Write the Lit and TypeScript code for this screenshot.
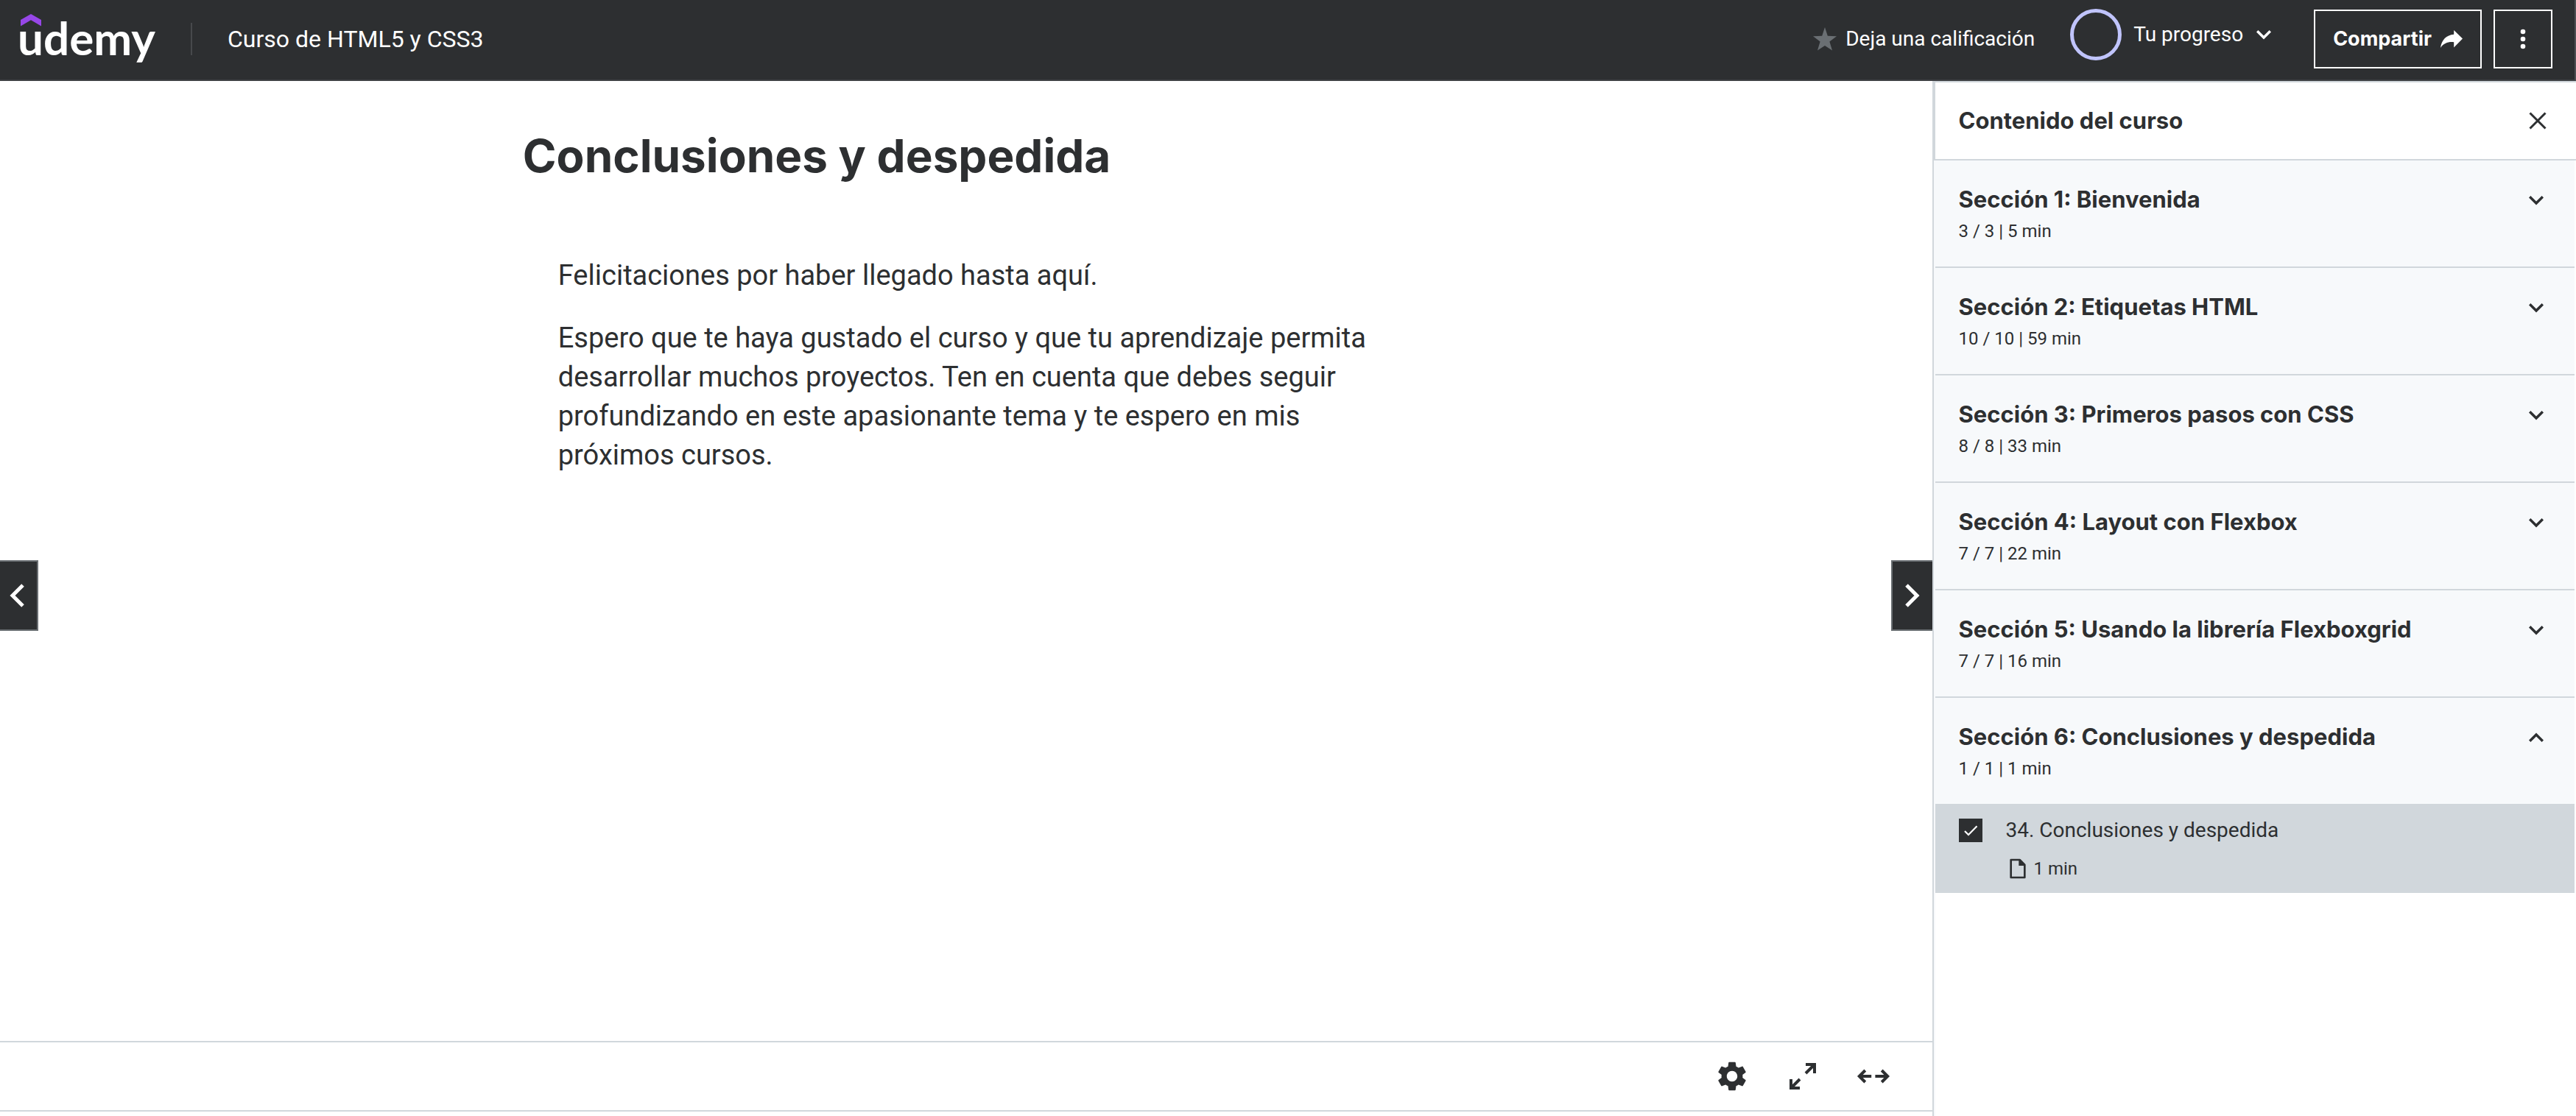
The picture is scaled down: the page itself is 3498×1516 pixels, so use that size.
import { LitElement, html, css, svg, nothing } from "lit";
import { customElement, state } from "lit/decorators.js";

interface Lecture {
  id: number;
  title: string;
  duration: string;
}

interface Section {
  title: string;
  summary: string;
  lectures: Lecture[];
}

const SECTIONS: Section[] = [
  { title: "Sección 1: Bienvenida", summary: "3 / 3 | 5 min", lectures: [] },
  { title: "Sección 2: Etiquetas HTML", summary: "10 / 10 | 59 min", lectures: [] },
  { title: "Sección 3: Primeros pasos con CSS", summary: "8 / 8 | 33 min", lectures: [] },
  { title: "Sección 4: Layout con Flexbox", summary: "7 / 7 | 22 min", lectures: [] },
  { title: "Sección 5: Usando la librería Flexboxgrid", summary: "7 / 7 | 16 min", lectures: [] },
  {
    title: "Sección 6: Conclusiones y despedida",
    summary: "1 / 1 | 1 min",
    lectures: [{ id: 34, title: "34. Conclusiones y despedida", duration: "1 min" }],
  },
];

const chevronDown = svg`<path d="M7.2 11.2 16 20l8.8-8.8" fill="none" stroke="currentColor" stroke-width="3.4"/>`;
const chevronUp = svg`<path d="M7.2 20.8 16 12l8.8 8.8" fill="none" stroke="currentColor" stroke-width="3.4"/>`;

@customElement("course-header")
export class CourseHeader extends LitElement {
  static styles = css`
    :host {
      display: block;
      font-family: Roboto, "Liberation Sans", sans-serif;
    }
    .bar {
      box-sizing: border-box;
      height: 110px;
      padding: 0 30px 2px 24px;
      display: flex;
      align-items: center;
      background: #2d2f31;
      border-bottom: 2px solid #3e4043;
      border-right: 2px solid #4d4f52;
      color: #fff;
    }
    .logo {
      align-self: flex-start;
      padding-top: 19px;
      display: flex;
      flex-direction: column;
      color: #fff;
      text-decoration: none;
    }
    .hat {
      display: block;
      width: 28px;
      height: 17px;
      margin-left: 4px;
    }
    .word {
      font: 700 62px/30px Lato, sans-serif;
    }
    .divider {
      width: 2px;
      height: 44px;
      margin: 0 48px;
      background: #47494c;
    }
    .course {
      color: #fff;
      font-size: 32px;
      line-height: 44px;
      text-decoration: none;
      white-space: nowrap;
    }
    .actions {
      margin-left: auto;
      display: flex;
      align-items: center;
    }
    button {
      box-sizing: border-box;
      margin: 0;
      padding: 0;
      border: 0;
      background: none;
      color: #fff;
      font: 400 28px/40px Roboto, "Liberation Sans", sans-serif;
      display: flex;
      align-items: center;
      white-space: nowrap;
      cursor: pointer;
    }
    svg {
      display: block;
      flex: none;
    }
    .rate {
      gap: 12px;
      margin-right: 48px;
    }
    .progress {
      padding-bottom: 12px;
      margin-right: 52px;
    }
    .ring {
      box-sizing: border-box;
      width: 70px;
      height: 70px;
      margin-right: 16px;
      border: 5px solid #c0c4fc;
      border-radius: 50%;
    }
    .progress svg {
      margin-left: 12px;
    }
    .share,
    .more {
      height: 80px;
      border: 2px solid #fff;
      justify-content: center;
    }
    .share {
      padding: 0 24px;
      gap: 12px;
      margin-right: 16px;
      font: 700 27px/40px Inter, "Liberation Sans", sans-serif;
    }
    .more {
      width: 80px;
    }
  `;

  render() {
    return html`
      <header class="bar">
        <a class="logo" href="#inicio">
          <svg class="hat" viewBox="0 0 28 17" aria-hidden="true">
            <path d="M14 0 28 8v8.5L14 8.2 0 16.5V8z" fill="#9747e8" />
          </svg>
          <span class="word">udemy</span>
        </a>
        <span class="divider"></span>
        <a class="course" href="#curso">Curso de HTML5 y CSS3</a>
        <div class="actions">
          <button class="rate" type="button">
            <svg width="32" height="32" viewBox="0 0 32 32" aria-hidden="true">
              <path d="M16 0l3.8 11.7L32 12.2l-9.6 7.4L26 31.6 16 25 6 31.6l3.6-12L0 12.2l12.2-.5z" fill="#6a6f73" />
            </svg>
            Deja una calificación
          </button>
          <button class="progress" type="button">
            <span class="ring"></span>
            Tu progreso
            <svg width="32" height="32" viewBox="0 0 32 32" aria-hidden="true">${chevronDown}</svg>
          </button>
          <button class="share" type="button">
            Compartir
            <svg width="30" height="24" viewBox="0 0 30 24" aria-hidden="true">
              <path d="M18.2 0 30 11.6 18.2 23.6v-7.4C10.5 15.4 4.4 17.6 0 24 1.4 13.2 8 6.6 18.2 5.8z" fill="currentColor" />
            </svg>
          </button>
          <button class="more" type="button" aria-label="Más opciones">
            <svg width="8" height="28" viewBox="0 0 8 28" fill="currentColor" aria-hidden="true">
              <circle cx="4" cy="4" r="3.3" /><circle cx="4" cy="14" r="3.3" /><circle cx="4" cy="24" r="3.3" />
            </svg>
          </button>
        </div>
      </header>
    `;
  }
}

@customElement("lecture-view")
export class LectureView extends LitElement {
  static styles = css`
    :host {
      display: flex;
      flex-direction: column;
      font-family: Roboto, "Liberation Sans", sans-serif;
      color: #2d2f31;
    }
    .stage {
      position: relative;
      flex: 1;
      display: flex;
      flex-direction: column;
      margin-bottom: 6px;
      border-bottom: 2px solid #d1d7dc;
    }
    article {
      flex: 1;
      box-sizing: border-box;
      width: 100%;
      max-width: 1204px;
      margin: 0 auto;
      padding-top: 64px;
    }
    h1 {
      margin: 0 0 98px;
      font: 700 62px/76px Inter, "Liberation Sans", sans-serif;
    }
    .body {
      padding: 0 48px;
      font-size: 38px;
      line-height: 53px;
    }
    p {
      margin: 0 0 32px;
    }
    button {
      box-sizing: border-box;
      margin: 0;
      padding: 0;
      border: 0;
      background: none;
      color: inherit;
      display: flex;
      align-items: center;
      justify-content: center;
      cursor: pointer;
    }
    svg {
      display: block;
    }
    .nav {
      position: absolute;
      top: 0;
      bottom: 0;
      margin: auto 0;
      height: 96px;
      background: #2d2f31;
      border: 2px solid #6a6f73;
      color: #fff;
    }
    .prev {
      left: 0;
      width: 52px;
      padding-right: 4px;
      border-left: 0;
    }
    .next {
      right: 0;
      width: 56px;
      border-right: 0;
    }
    .controls {
      height: 92px;
      padding: 0 56px;
      display: flex;
      align-items: center;
      justify-content: flex-end;
      gap: 48px;
      border-top: 2px solid #d1d7dc;
    }
  `;

  render() {
    return html`
      <div class="stage">
        <article>
          <h1>Conclusiones y despedida</h1>
          <div class="body">
            <p>Felicitaciones por haber llegado hasta aquí.</p>
            <p>
              Espero que te haya gustado el curso y que tu aprendizaje permita desarrollar muchos
              proyectos. Ten en cuenta que debes seguir profundizando en este apasionante tema y te
              espero en mis próximos cursos.
            </p>
          </div>
        </article>
        <div class="controls">
          <button type="button" aria-label="Configuración">
            <svg width="48" height="48" viewBox="0 0 24 24" fill="currentColor" aria-hidden="true">
              <path d="M19.14 12.94c.04-.3.06-.61.06-.94 0-.32-.02-.64-.07-.94l2.03-1.58c.18-.14.23-.41.12-.61l-1.92-3.32c-.12-.22-.37-.29-.59-.22l-2.39.96c-.5-.38-1.03-.7-1.62-.94L14.4 2.81c-.04-.24-.24-.41-.48-.41h-3.84c-.24 0-.43.17-.47.41l-.36 2.54c-.59.24-1.13.57-1.62.94l-2.39-.96c-.22-.08-.47 0-.59.22L2.74 8.87c-.12.21-.08.47.12.61l2.03 1.58c-.05.3-.09.63-.09.94s.02.64.07.94l-2.03 1.58c-.18.14-.23.41-.12.61l1.92 3.32c.12.22.37.29.59.22l2.39-.96c.5.38 1.03.7 1.62.94l.36 2.54c.05.24.24.41.48.41h3.84c.24 0 .44-.17.47-.41l.36-2.54c.59-.24 1.13-.56 1.62-.94l2.39.96c.22.08.47 0 .59-.22l1.92-3.32c.12-.22.07-.47-.12-.61l-2.01-1.58zM12 15.6c-1.98 0-3.6-1.62-3.6-3.6s1.62-3.6 3.6-3.6 3.6 1.62 3.6 3.6-1.62 3.6-3.6 3.6z" />
            </svg>
          </button>
          <button type="button" aria-label="Pantalla completa">
            <svg width="48" height="48" viewBox="0 0 24 24" aria-hidden="true">
              <path d="M14 3h7v7h-2V5h-5zM3 14h2v5h5v2H3z" fill="currentColor" />
              <path d="M20 4l-6 6M4 20l6-6" fill="none" stroke="currentColor" stroke-width="2" />
            </svg>
          </button>
          <button type="button" aria-label="Vista ampliada">
            <svg width="48" height="48" viewBox="0 0 24 24" fill="none" stroke="currentColor" stroke-width="2" aria-hidden="true">
              <path d="M3 12h7.6M6.4 8l-4 4 4 4M13.2 12h7.8M17.6 8l4 4-4 4" />
            </svg>
          </button>
        </div>
        <button class="nav prev" type="button" aria-label="Clase anterior">
          <svg width="24" height="36" viewBox="0 0 24 36" aria-hidden="true">
            <path d="M20 4 6 18l14 14" fill="none" stroke="currentColor" stroke-width="5" />
          </svg>
        </button>
        <button class="nav next" type="button" aria-label="Clase siguiente">
          <svg width="24" height="36" viewBox="0 0 24 36" aria-hidden="true">
            <path d="M4 4l14 14L4 32" fill="none" stroke="currentColor" stroke-width="5" />
          </svg>
        </button>
      </div>
    `;
  }
}

@customElement("course-contents")
export class CourseContents extends LitElement {
  static styles = css`
    :host {
      box-sizing: border-box;
      display: flex;
      flex-direction: column;
      border-left: 2px solid #d1d7dc;
      font-family: Roboto, "Liberation Sans", sans-serif;
      color: #2d2f31;
    }
    .head {
      box-sizing: border-box;
      height: 108px;
      padding: 0 36px 0 32px;
      display: flex;
      align-items: center;
      justify-content: space-between;
      border: 2px solid #d1d7dc;
      border-right: 0;
    }
    h2,
    h3 {
      margin: 0;
      font: 700 31px/42px Inter, "Liberation Sans", sans-serif;
    }
    button {
      margin: 0;
      padding: 0;
      border: 0;
      background: none;
      color: inherit;
      font: inherit;
      text-align: left;
      cursor: pointer;
    }
    svg {
      display: block;
      flex: none;
    }
    .list {
      flex: 1;
      padding-right: 2px;
      border-left: 2px solid #f7f9fb;
    }
    .section {
      box-sizing: border-box;
      width: 100%;
      padding: 32px 36px 34px 32px;
      display: flex;
      justify-content: space-between;
      gap: 32px;
      background: #f7f9fb;
      border-bottom: 2px solid #d1d7dc;
    }
    .section svg {
      margin-top: 6px;
    }
    .summary {
      display: block;
      margin-top: 8px;
      font-size: 24px;
      line-height: 28px;
    }
    ul {
      margin: 0;
      padding: 0;
      list-style: none;
    }
    .lecture {
      padding: 18px 32px 17px;
      display: grid;
      grid-template-columns: 32px 1fr;
      column-gap: 32px;
      row-gap: 20px;
      background: #d1d7dc;
    }
    .tick {
      display: grid;
    }
    .tick > * {
      grid-area: 1 / 1;
    }
    input {
      appearance: none;
      width: 32px;
      height: 32px;
      margin: 0;
      border: 2px solid #2d2f31;
    }
    input:checked {
      background: #2d2f31;
    }
    .tick svg {
      pointer-events: none;
    }
    .name {
      font-size: 28px;
      line-height: 32px;
    }
    .meta {
      grid-column: 2;
      display: flex;
      align-items: center;
      gap: 6px;
      font-size: 24px;
      line-height: 32px;
    }
  `;

  @state() private open = new Set<number>([5]);

  private toggle(index: number) {
    const next = new Set(this.open);
    if (!next.delete(index)) next.add(index);
    this.open = next;
  }

  private renderLecture(lecture: Lecture) {
    const id = `clase-${lecture.id}`;
    return html`
      <li class="lecture">
        <span class="tick">
          <input id=${id} type="checkbox" checked />
          <svg width="32" height="32" viewBox="0 0 32 32" aria-hidden="true">
            <path d="M8 17l5 5L24.5 10.2" fill="none" stroke="#fff" stroke-width="2.2" />
          </svg>
        </span>
        <label class="name" for=${id}>${lecture.title}</label>
        <span class="meta">
          <svg width="32" height="32" viewBox="0 0 24 24" aria-hidden="true">
            <path d="M5 3h9l5 5v13H5z" fill="none" stroke="currentColor" stroke-width="2" stroke-linejoin="round" />
            <path d="M13 2.5V9h6.5z" fill="currentColor" />
          </svg>
          ${lecture.duration}
        </span>
      </li>
    `;
  }

  private renderSection(section: Section, index: number) {
    const expanded = this.open.has(index);
    return html`
      <button
        class="section"
        type="button"
        aria-expanded=${expanded ? "true" : "false"}
        @click=${() => this.toggle(index)}
      >
        <span>
          <h3>${section.title}</h3>
          <span class="summary">${section.summary}</span>
        </span>
        <svg width="32" height="32" viewBox="0 0 32 32" aria-hidden="true">
          ${expanded ? chevronUp : chevronDown}
        </svg>
      </button>
      ${expanded && section.lectures.length
        ? html`<ul>${section.lectures.map((lecture) => this.renderLecture(lecture))}</ul>`
        : nothing}
    `;
  }

  render() {
    return html`
      <div class="head">
        <h2>Contenido del curso</h2>
        <button type="button" aria-label="Cerrar">
          <svg width="32" height="32" viewBox="0 0 32 32" aria-hidden="true">
            <path d="M5.5 5.5l21 21M26.5 5.5l-21 21" fill="none" stroke="currentColor" stroke-width="3" />
          </svg>
        </button>
      </div>
      <div class="list">${SECTIONS.map((section, index) => this.renderSection(section, index))}</div>
    `;
  }
}

@customElement("app-root")
export class AppRoot extends LitElement {
  static styles = css`
    :host {
      display: flex;
      flex-direction: column;
      min-height: 100vh;
      background: #fff;
    }
    .content {
      flex: 1;
      display: flex;
    }
    lecture-view {
      flex: 1;
      min-width: 0;
    }
    course-contents {
      flex: 0 0 25%;
    }
  `;

  render() {
    return html`
      <course-header></course-header>
      <div class="content">
        <lecture-view></lecture-view>
        <course-contents></course-contents>
      </div>
    `;
  }
}
